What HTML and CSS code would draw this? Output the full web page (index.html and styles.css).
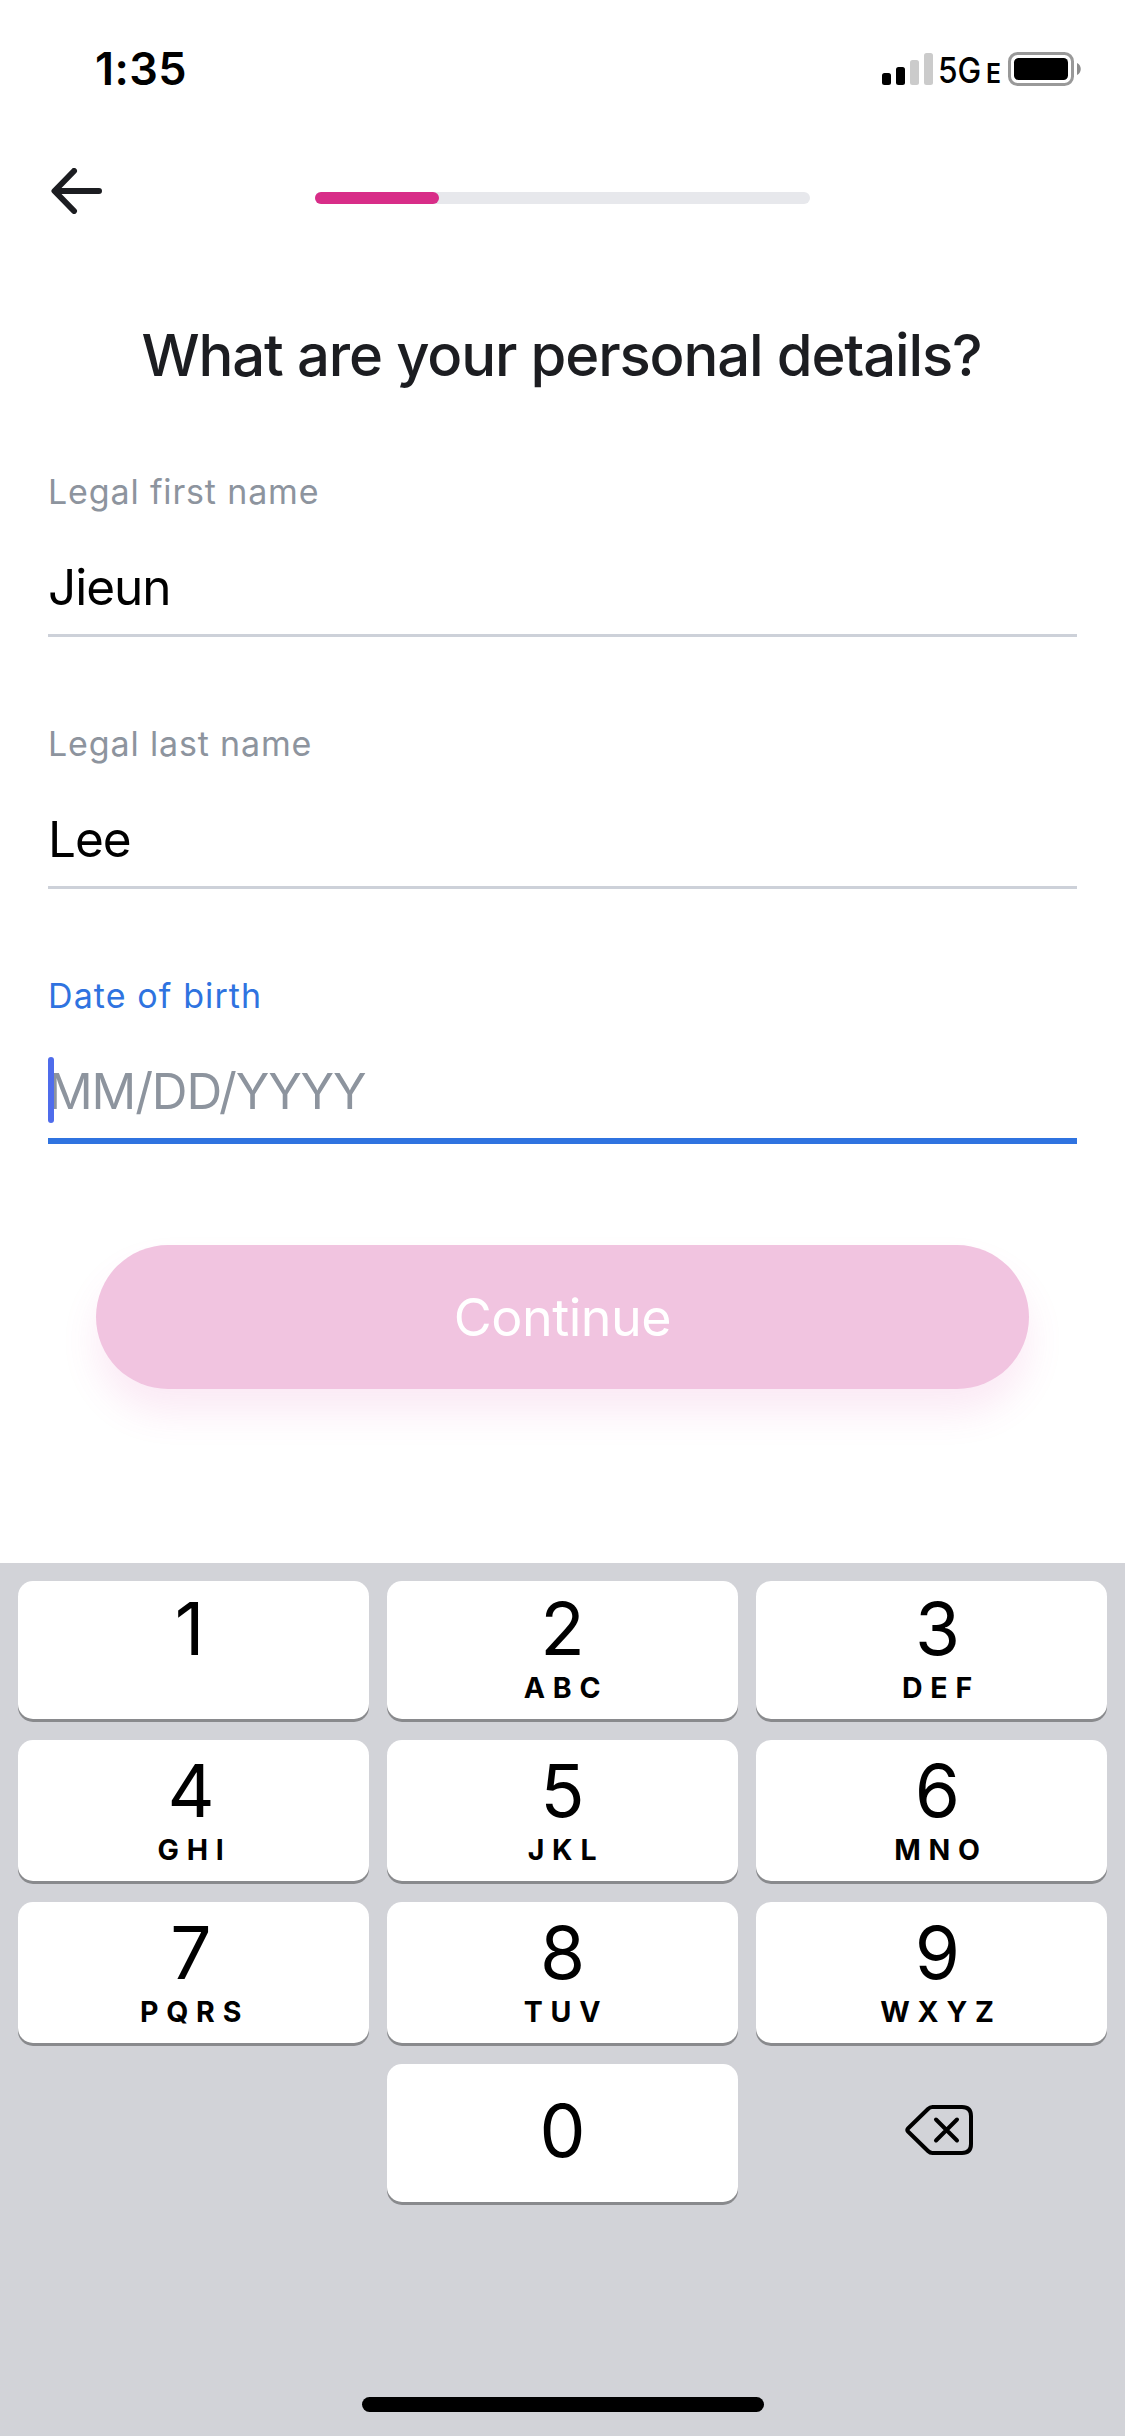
FILE: index.html
```html
<!DOCTYPE html>
<html lang="en">
<head>
<meta charset="utf-8">
<title>Personal details</title>
<link rel="stylesheet" href="styles.css">
</head>
<body>
<div class="screen">
  <div class="status">
    <span class="time">1:35</span>
    <div class="status-right">
      <svg class="signal" width="51" height="32" viewBox="0 0 51 32">
        <rect x="0" y="20" width="9" height="12" rx="2.5"/>
        <rect x="14" y="14" width="9" height="18" rx="2.5"/>
        <rect x="28" y="7" width="9" height="25" rx="2.5" fill="#cbcbcb"/>
        <rect x="42" y="0" width="9" height="32" rx="2.5" fill="#cbcbcb"/>
      </svg>
      <span class="network">5G</span>
      <span class="network-sub">E</span>
      <svg class="battery" width="74" height="34" viewBox="0 0 74 34">
        <rect x="1.5" y="1.5" width="63" height="31" rx="8" fill="none" stroke="#999" stroke-width="3"/>
        <rect x="6" y="6" width="54" height="22" rx="4.5"/>
        <path d="M69 11c5 2 5 10 0 12z" fill="#8c8c8c"/>
      </svg>
    </div>
  </div>
  <header class="nav">
    <svg class="back" width="52" height="46" viewBox="0 0 52 46">
      <path d="M24 3 4.500 23 24 43M5 23h44" fill="none" stroke="#1c1d21" stroke-width="6" stroke-linecap="round" stroke-linejoin="round"/>
    </svg>
    <div class="progress"><div class="progress-fill"></div></div>
  </header>
  <main class="form">
    <h1 class="title">What are your personal details?</h1>
    <div class="field">
      <div class="label">Legal first name</div>
      <div class="value">Jieun</div>
    </div>
    <div class="field">
      <div class="label">Legal last name</div>
      <div class="value">Lee</div>
    </div>
    <div class="field field-active">
      <div class="label label-dob">Date of birth</div>
      <div class="value placeholder">MM/DD/YYYY<span class="caret"></span></div>
    </div>
    <button class="continue">Continue</button>
  </main>
  <div class="keyboard">
    <div class="keys">
      <div class="key left"><span class="digit digit-one">1</span></div>
      <div class="key"><span class="digit">2</span><span class="letters">ABC</span></div>
      <div class="key right"><span class="digit">3</span><span class="letters">DEF</span></div>
      <div class="key left tall"><span class="digit">4</span><span class="letters">GHI</span></div>
      <div class="key tall"><span class="digit">5</span><span class="letters">JKL</span></div>
      <div class="key right tall"><span class="digit">6</span><span class="letters">MNO</span></div>
      <div class="key left tall"><span class="digit">7</span><span class="letters">PQRS</span></div>
      <div class="key tall"><span class="digit">8</span><span class="letters">TUV</span></div>
      <div class="key right tall"><span class="digit">9</span><span class="letters">WXYZ</span></div>
      <div class="key zero"><span class="digit">0</span></div>
      <div class="delete">
        <svg width="68" height="50" viewBox="0 0 68 50">
          <g fill="none" stroke="#000" stroke-width="4" stroke-linecap="round" stroke-linejoin="round">
            <path d="M27.500 2H57q9 0 9 9v28q0 9-9 9H27.500q-2.500 0-4.500-2L3 26.500q-1.500-1.500 0-3L23 4q2-2 4.500-2z"/>
            <path d="m31 14.500 21 21m0-21-21 21"/>
          </g>
        </svg>
      </div>
    </div>
    <div class="home-bar"></div>
  </div>
</div>
</body>
</html>
```
FILE: styles.css
```css
* { box-sizing: border-box; }
body {
  margin: 0;
  background: #fff;
  font-family: Inter, "Liberation Sans", sans-serif;
  color: #000;
}
.screen {
  width: 1125px;
  height: 2436px;
  display: flex;
  flex-direction: column;
}
.status {
  height: 168px;
  padding: 42px 43px 0 95px;
  display: flex;
  justify-content: space-between;
  align-items: flex-start;
}
.time {
  font-size: 45px;
  font-weight: 600;
  line-height: 54px;
  letter-spacing: 0.4px;
}
.status-right {
  display: flex;
  padding-top: 10px;
  line-height: 34px;
  white-space: nowrap;
}
.signal { margin-top: 1px; }
.network {
  width: 43px;
  margin: 0 0 0 5px;
  font-size: 36px;
  font-weight: 500;
  line-height: 36px;
  transform: scaleX(0.88);
  transform-origin: 0 0;
}
.network-sub {
  width: 14px;
  margin: 3px 8px 0 5px;
  font-size: 27.500px;
  font-weight: 600;
  line-height: 36px;
  transform: scaleX(0.9);
  transform-origin: 0 0;
}
.nav {
  height: 152px;
  padding-left: 50px;
  display: flex;
  align-items: flex-start;
}
.progress {
  width: 495px;
  height: 12px;
  margin: 24px 0 0 213px;
  border-radius: 6px;
  background: #e7e8ec;
}
.progress-fill {
  width: 124px;
  height: 12px;
  border-radius: 6px;
  background: #d82d88;
}
.form {
  height: 1243px;
  padding: 0 48px;
}
.title {
  margin: 0 0 79px;
  padding-right: 2px;
  font-size: 58px;
  font-weight: 500;
  line-height: 70px;
  letter-spacing: -1.150px;
  text-align: center;
  white-space: nowrap;
  color: #1c1d21;
}
.field {
  height: 168px;
  margin-bottom: 84px;
  border-bottom: 3px solid #cdd1d9;
}
.label {
  padding-top: 1px;
  margin-bottom: 43px;
  font-size: 34px;
  line-height: 44px;
  letter-spacing: 0.850px;
  color: #8d949e;
}
.value {
  position: relative;
  font-size: 49.500px;
  line-height: 60px;
  letter-spacing: -1px;
}
.field-active {
  height: 171px;
  margin: 0 0 101px;
  border-bottom: 6px solid #2f73e0;
}
.label-dob {
  letter-spacing: 1.100px;
  color: #2f73e0;
}
.placeholder {
  letter-spacing: -1.150px;
  color: #8d949e;
}
.caret {
  position: absolute;
  left: 0;
  top: -4px;
  width: 6px;
  height: 66px;
  border-radius: 3px;
  background: #4f6ceb;
}
.continue {
  display: block;
  width: 933px;
  height: 144px;
  margin: 0 auto;
  padding: 0;
  border: 0;
  border-radius: 72px;
  background: #f1c4e0;
  box-shadow: 0 24px 36px rgba(222, 80, 170, 0.12);
  font-family: inherit;
  font-size: 52px;
  font-weight: 400;
  letter-spacing: -0.5px;
  color: #fff;
}
.keyboard {
  flex: 1;
  padding: 18px 18px 0;
  background: #d2d3d8;
}
.keys {
  display: grid;
  grid-template-columns: repeat(3, 351px);
  grid-template-rows: 138px 141px 141px 138px;
  gap: 21px 18px;
}
.key {
  display: flex;
  flex-direction: column;
  align-items: center;
  padding-top: 8px;
  border-radius: 15px;
  background: #fff;
  box-shadow: 0 3px 0 #898a8d;
}
.tall { padding-top: 11px; }
.left { padding-right: 5px; }
.right { padding-left: 12px; }
.zero {
  grid-column: 2;
  padding-top: 27px;
}
.digit {
  font-size: 73px;
  line-height: 80px;
}
.digit-one { padding-right: 3px; }
.letters {
  margin-top: 2px;
  padding-left: 7px;
  font-size: 28.500px;
  font-weight: 700;
  line-height: 34px;
  letter-spacing: 7.800px;
}
.delete {
  display: flex;
  align-items: flex-start;
  justify-content: center;
  padding: 41px 0 0 15px;
}
.home-bar {
  width: 402px;
  height: 15px;
  margin: 195px auto 0;
  border-radius: 7.500px;
  background: #000;
}
```
